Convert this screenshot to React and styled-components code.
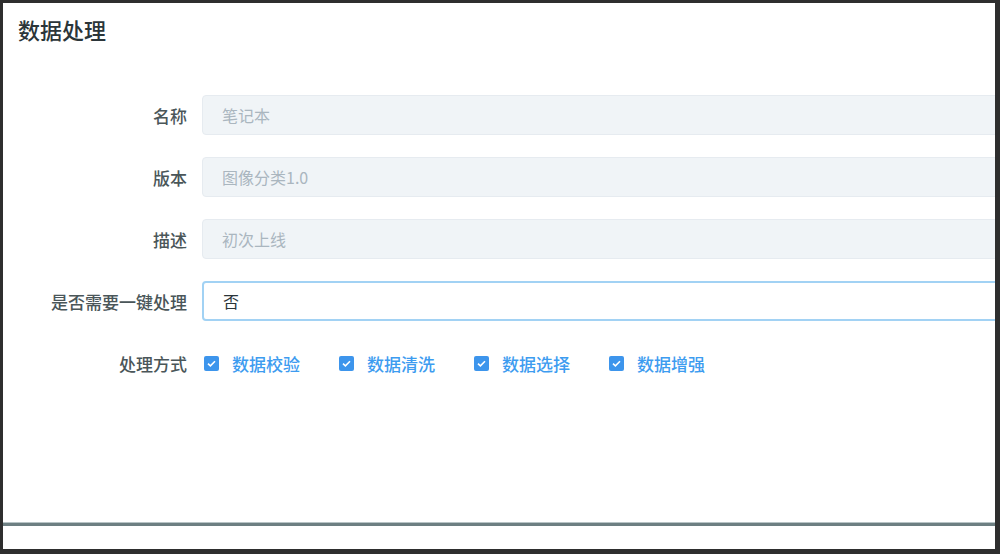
import styled, { createGlobalStyle } from "styled-components";

const GlobalStyle = createGlobalStyle`
  html, body {
    margin: 0;
    padding: 0;
    background: #2e2e2e;
  }
  * {
    box-sizing: border-box;
  }
`;

const Frame = styled.div`
  width: 1000px;
  height: 554px;
  background: #2e2e2e;
  padding: 3px 5px 5px 3px;
  font-family: "Noto Sans CJK SC", "Noto Sans", sans-serif;
`;

const Panel = styled.div`
  width: 100%;
  height: 100%;
  background: #ffffff;
  overflow: hidden;
  display: flex;
  flex-direction: column;
`;

const Title = styled.h2`
  margin: 0;
  padding: 10px 0 0 15px;
  font-size: 22px;
  line-height: 32px;
  font-weight: 500;
  color: #2b3539;
`;

const Form = styled.div`
  flex: 1;
  display: flex;
  flex-direction: column;
  gap: 22px;
  padding-top: 50px;
`;

const Row = styled.div`
  display: flex;
  align-items: center;
  height: 40px;
`;

const Label = styled.label`
  flex: 0 0 199px;
  padding-right: 15px;
  text-align: right;
  font-size: 17px;
  font-weight: 500;
  color: #4a5659;
`;

const Field = styled.div`
  flex: 0 0 900px;
  height: 40px;
  display: flex;
  align-items: center;
  padding-left: 19px;
  border-radius: 4px;
  font-size: 16px;
  background: ${(p) => (p.$disabled ? "#f0f4f7" : "#ffffff")};
  color: ${(p) => (p.$disabled ? "#aab6bf" : "#2b3539")};
  border: ${(p) => (p.$active ? "2px solid #a2d2f4" : "1px solid #e6ebf0")};
`;

const Group = styled.div`
  display: flex;
  align-items: center;
  gap: 39px;
  padding-left: 2px;
`;

const Check = styled.span`
  display: flex;
  align-items: center;
  gap: 13px;
  font-size: 17px;
  font-weight: 500;
  color: #3d9cf0;
`;

const Box = styled.span`
  width: 15px;
  height: 15px;
  border-radius: 2px;
  background: #3d95ec;
  display: flex;
  align-items: center;
  justify-content: center;
`;

const Footer = styled.div`
  height: 27px;
  border-top: 1px solid #b8c4c6;
  box-shadow: inset 0 3px 0 #6d7f82;
`;

const fields = [
  { label: "名称", value: "笔记本" },
  { label: "版本", value: "图像分类1.0" },
  { label: "描述", value: "初次上线" },
];

const methods = ["数据校验", "数据清洗", "数据选择", "数据增强"];

function CheckMark() {
  return (
    <svg width="9" height="7" viewBox="0 0 9 7">
      <path d="M1 3.6 L3.4 5.8 L8 1.2" fill="none" stroke="#fff" strokeWidth="1.6" />
    </svg>
  );
}

export default function App() {
  return (
    <>
      <GlobalStyle />
      <Frame>
        <Panel>
          <Title>数据处理</Title>
          <Form>
            {fields.map((f) => (
              <Row key={f.label}>
                <Label>{f.label}</Label>
                <Field $disabled>{f.value}</Field>
              </Row>
            ))}
            <Row>
              <Label>是否需要一键处理</Label>
              <Field $active>否</Field>
            </Row>
            <Row>
              <Label>处理方式</Label>
              <Group>
                {methods.map((m) => (
                  <Check key={m}>
                    <Box>
                      <CheckMark />
                    </Box>
                    {m}
                  </Check>
                ))}
              </Group>
            </Row>
          </Form>
          <Footer />
        </Panel>
      </Frame>
    </>
  );
}
